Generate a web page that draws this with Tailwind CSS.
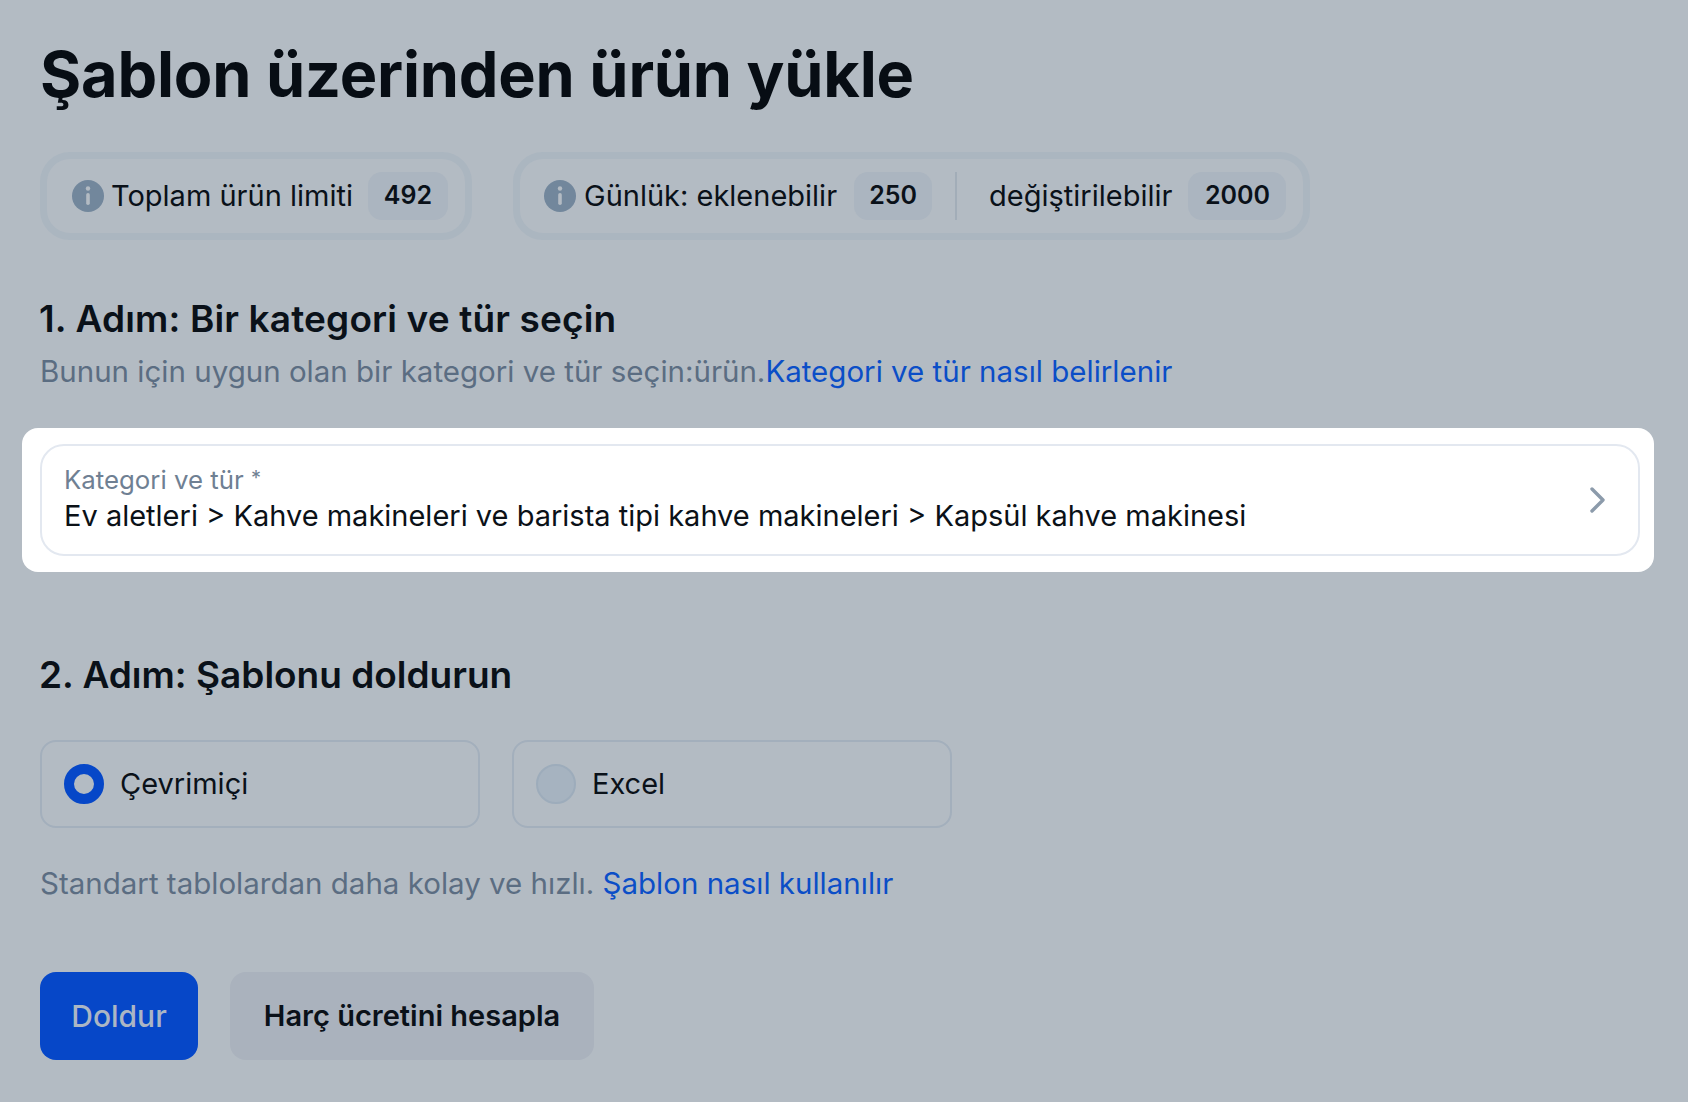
<!DOCTYPE html>
<html lang="tr">
  <head>
    <meta charset="UTF-8" />
    <meta name="viewport" content="width=device-width, initial-scale=1.0" />
    <title>Şablon üzerinden ürün yükle</title>
    <script src="https://cdn.jsdelivr.net/npm/@tailwindcss/browser@4"></script>
  </head>
  <body class="bg-[#b3bbc3] font-['Inter',sans-serif] text-[#0a1119]">
    <main class="w-[1688px] h-[1102px] overflow-hidden px-[40px] pt-[34px]">
      <h1 class="h-[80px] text-[63px] leading-[80px] font-bold tracking-[-0.2px] text-[#070d14]">Şablon üzerinden ürün yükle</h1>

      <div class="mt-[38px] flex gap-[41px]">
        <div class="flex items-center h-[88px] w-[432px] pl-[25px] rounded-[30px] border-[7px] border-[#abb6c0]">
          <svg class="w-[32px] h-[32px] shrink-0" viewBox="0 0 32 32"><circle cx="16" cy="16" r="16" fill="#72879c"/><circle cx="16" cy="8.5" r="2.2" fill="#b3bbc3"/><rect x="14.2" y="13" width="3.6" height="12" rx="1.8" fill="#b3bbc3"/></svg>
          <span class="ml-[7px] text-[29px]">Toplam ürün limiti</span>
          <span class="ml-[15px] h-[48px] w-[80px] flex items-center justify-center rounded-[14px] bg-[#abb5c0] text-[25px] font-semibold">492</span>
        </div>
        <div class="flex items-center h-[88px] w-[797px] pl-[24px] rounded-[30px] border-[7px] border-[#abb6c0]">
          <svg class="w-[32px] h-[32px] shrink-0" viewBox="0 0 32 32"><circle cx="16" cy="16" r="16" fill="#72879c"/><circle cx="16" cy="8.5" r="2.2" fill="#b3bbc3"/><rect x="14.2" y="13" width="3.6" height="12" rx="1.8" fill="#b3bbc3"/></svg>
          <span class="ml-[8px] text-[29px]">Günlük: eklenebilir</span>
          <span class="ml-[17px] h-[48px] w-[78px] flex items-center justify-center rounded-[14px] bg-[#abb5c0] text-[25px] font-semibold">250</span>
          <span class="ml-[23px] h-[48px] w-[2px] bg-[#a2adb8]"></span>
          <span class="ml-[32px] text-[29px]">değiştirilebilir</span>
          <span class="ml-[16px] h-[48px] w-[98px] flex items-center justify-center rounded-[14px] bg-[#abb5c0] text-[25px] font-semibold">2000</span>
        </div>
      </div>

      <h2 class="mt-[59px] h-[40px] text-[37px] leading-[40px] font-semibold tracking-[0.15px] -ml-[1px]">1. Adım: Bir kategori ve tür seçin</h2>
      <p class="mt-[14px] h-[36px] text-[29.5px] leading-[36px] text-[#5b6d82]">Bunun için uygun olan bir kategori ve tür seçin:ürün.<a class="text-[#0b4ec7]">Kategori ve tür nasıl belirlenir</a></p>

      <div class="mt-[39px] -ml-[18px] w-[1632px] h-[144px] pl-[18px] pr-[14px] py-[16px] bg-white rounded-[16px]">
        <div class="h-[112px] pl-[22px] pr-[30px] flex items-center justify-between border-2 border-[#e3e8f0] rounded-[24px]">
          <div>
            <div class="text-[25.8px] leading-[30px] -mt-[3px] text-[#6f8093]">Kategori ve tür <span class="text-[20px] align-[4px]">*</span></div>
            <div class="text-[29px] leading-[38px] mt-[2px] text-[#0b1117]">Ev aletleri &gt; Kahve makineleri ve barista tipi kahve makineleri &gt; Kapsül kahve makinesi</div>
          </div>
          <svg class="w-[20px] h-[28px]" viewBox="0 0 20 28" fill="none" stroke="#8c9bab" stroke-width="3.4" stroke-linecap="round" stroke-linejoin="round"><path d="M4 3l11 11L4 25"/></svg>
        </div>
      </div>

      <h2 class="mt-[83px] h-[40px] text-[37px] leading-[40px] font-semibold -ml-[1px]">2. Adım: Şablonu doldurun</h2>

      <div class="mt-[45px] flex gap-[32px]">
        <label class="flex items-center w-[440px] h-[88px] pl-[22px] border-2 border-[#a3afbc] rounded-[16px]">
          <span class="w-[40px] h-[40px] rounded-full border-[10px] border-[#0647c8]"></span>
          <span class="ml-[16px] text-[29px]">Çevrimiçi</span>
        </label>
        <label class="flex items-center w-[440px] h-[88px] pl-[22px] border-2 border-[#a3afbc] rounded-[16px]">
          <span class="w-[40px] h-[40px] rounded-full border-2 border-[#9dacbb] bg-[#a6b3c0]"></span>
          <span class="ml-[16px] text-[29px]">Excel</span>
        </label>
      </div>

      <p class="mt-[37px] h-[36px] text-[29.5px] leading-[36px] text-[#5b6d82]">Standart tablolardan daha kolay ve hızlı. <a class="text-[#0b4ec7]">Şablon nasıl kullanılır</a></p>

      <div class="mt-[71px] flex gap-[32px]">
        <button class="w-[158px] h-[88px] rounded-[16px] bg-[#0647c8] text-[#abb6c4] text-[30px] font-medium">Doldur</button>
        <button class="w-[364px] h-[88px] rounded-[16px] bg-[#aab2bd] text-[29px] font-semibold">Harç ücretini hesapla</button>
      </div>
    </main>
  </body>
</html>
